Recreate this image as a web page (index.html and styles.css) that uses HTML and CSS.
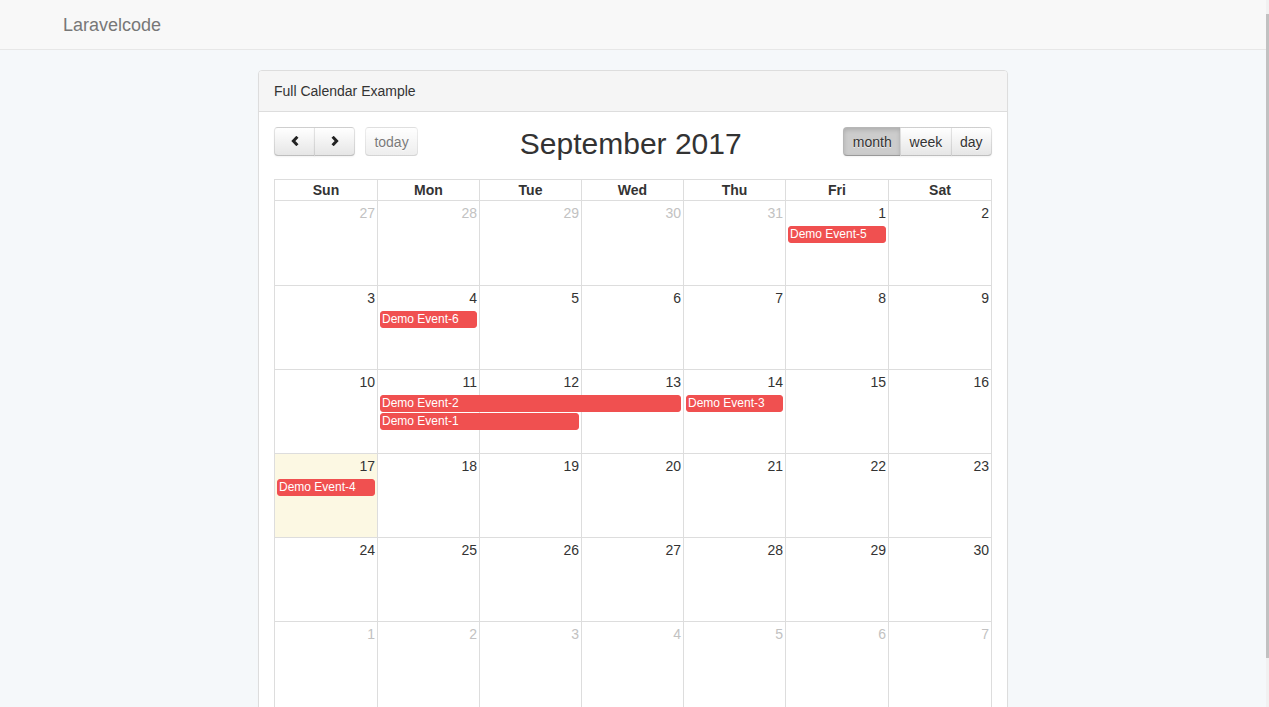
FILE: index.html
```html
<!DOCTYPE html>
<html lang="en">
<head>
<meta charset="utf-8">
<title>Laravelcode</title>
<link rel="stylesheet" href="styles.css">
</head>
<body>
<nav class="navbar">
  <div class="container">
    <a class="brand" href="#">Laravelcode</a>
  </div>
</nav>
<main class="container">
  <section class="panel">
    <div class="panel-heading">Full Calendar Example</div>
    <div class="panel-body">
      <div class="toolbar">
        <div class="tb-left">
          <div class="btn-group">
            <button class="btn icon-btn corner-left" aria-label="prev"><svg class="chev" viewBox="0 0 8 10" width="8" height="10"><polyline points="6.4,0.8 2.4,5 6.4,9.2"/></svg></button>
            <button class="btn icon-btn corner-right" aria-label="next"><svg class="chev" viewBox="0 0 8 10" width="8" height="10"><polyline points="1.6,0.8 5.6,5 1.6,9.2"/></svg></button>
          </div>
          <button class="btn corner-left corner-right disabled">today</button>
        </div>
        <div class="tb-center"><h2 class="title">September 2017</h2></div>
        <div class="tb-right">
          <div class="btn-group">
            <button class="btn corner-left active">month</button>
            <button class="btn">week</button>
            <button class="btn corner-right">day</button>
          </div>
        </div>
      </div>

      <div class="cal">
        <div class="cal-head">
          <div class="hd">Sun</div><div class="hd">Mon</div><div class="hd">Tue</div><div class="hd">Wed</div><div class="hd">Thu</div><div class="hd">Fri</div><div class="hd">Sat</div>
        </div>

        <div class="week first">
          <div class="bg c1"></div><div class="bg c2"></div><div class="bg c3"></div><div class="bg c4"></div><div class="bg c5"></div><div class="bg c6"></div><div class="bg c7"></div>
          <div class="num c1 other">27</div><div class="num c2 other">28</div><div class="num c3 other">29</div><div class="num c4 other">30</div><div class="num c5 other">31</div><div class="num c6">1</div><div class="num c7">2</div>
          <div class="ev l1 c6">Demo Event-5</div>
        </div>

        <div class="week">
          <div class="bg c1"></div><div class="bg c2"></div><div class="bg c3"></div><div class="bg c4"></div><div class="bg c5"></div><div class="bg c6"></div><div class="bg c7"></div>
          <div class="num c1">3</div><div class="num c2">4</div><div class="num c3">5</div><div class="num c4">6</div><div class="num c5">7</div><div class="num c6">8</div><div class="num c7">9</div>
          <div class="ev l1 c2">Demo Event-6</div>
        </div>

        <div class="week">
          <div class="bg c1"></div><div class="bg c2"></div><div class="bg c3"></div><div class="bg c4"></div><div class="bg c5"></div><div class="bg c6"></div><div class="bg c7"></div>
          <div class="num c1">10</div><div class="num c2">11</div><div class="num c3">12</div><div class="num c4">13</div><div class="num c5">14</div><div class="num c6">15</div><div class="num c7">16</div>
          <div class="ev l1 c2 span3">Demo Event-2</div>
          <div class="ev l1 c5">Demo Event-3</div>
          <div class="ev l2 c2 span2">Demo Event-1</div>
        </div>

        <div class="week">
          <div class="bg c1 today"></div><div class="bg c2"></div><div class="bg c3"></div><div class="bg c4"></div><div class="bg c5"></div><div class="bg c6"></div><div class="bg c7"></div>
          <div class="num c1">17</div><div class="num c2">18</div><div class="num c3">19</div><div class="num c4">20</div><div class="num c5">21</div><div class="num c6">22</div><div class="num c7">23</div>
          <div class="ev l1 c1">Demo Event-4</div>
        </div>

        <div class="week">
          <div class="bg c1"></div><div class="bg c2"></div><div class="bg c3"></div><div class="bg c4"></div><div class="bg c5"></div><div class="bg c6"></div><div class="bg c7"></div>
          <div class="num c1">24</div><div class="num c2">25</div><div class="num c3">26</div><div class="num c4">27</div><div class="num c5">28</div><div class="num c6">29</div><div class="num c7">30</div>
        </div>

        <div class="week last">
          <div class="bg c1"></div><div class="bg c2"></div><div class="bg c3"></div><div class="bg c4"></div><div class="bg c5"></div><div class="bg c6"></div><div class="bg c7"></div>
          <div class="num c1 other">1</div><div class="num c2 other">2</div><div class="num c3 other">3</div><div class="num c4 other">4</div><div class="num c5 other">5</div><div class="num c6 other">6</div><div class="num c7 other">7</div>
        </div>
      </div>
    </div>
  </section>
</main>
<div class="scrollbar" aria-hidden="true"><div class="thumb"></div></div>
</body>
</html>
```

FILE: styles.css
```css
* { box-sizing: border-box; }

body {
  margin: 0 3px 0 0;
  background: #f5f8fa;
  font-family: "Liberation Sans", Arial, Helvetica, sans-serif;
  font-size: 14px;
  line-height: 1.42857;
  color: #333;
}

/* overlay scrollbar (drawn over the right edge of the window) */
.scrollbar {
  position: fixed;
  top: 0;
  right: 0;
  bottom: 0;
  width: 3px;
  background: #f1f1f1;
  padding-top: 14px;
}
.scrollbar .thumb {
  height: 644px;
  background: #c1c1c1;
}

.container {
  width: 1170px;
  margin: 0 auto;
  padding: 0 15px;
}

.navbar {
  height: 50px;
  background: #f8f8f8;
  border-bottom: 1px solid #e7e7e7;
  margin-bottom: 20px;
}

.brand {
  display: inline-block;
  padding: 15px 0;
  font-size: 18px;
  line-height: 20px;
  color: #777;
  text-decoration: none;
}

.panel {
  width: 750px;
  margin: 0 auto 20px;
  background: #fff;
  border: 1px solid #ddd;
  border-radius: 4px;
  box-shadow: 0 1px 1px rgba(0,0,0,.05);
}

.panel-heading {
  padding: 10px 15px;
  background: #f5f5f5;
  border-bottom: 1px solid #ddd;
  border-radius: 3px 3px 0 0;
  line-height: 20px;
}

.panel-body {
  padding: 15px;
}

/* toolbar */
.toolbar {
  display: flex;
  align-items: flex-start;
  height: 33px;
  margin-bottom: 19px;
}

.tb-left, .tb-right {
  display: flex;
  align-items: flex-start;
}

.tb-left .btn-group { margin-right: 10px; }

.tb-center {
  flex: 1;
  text-align: center;
}

.title {
  margin: 0;
  font-size: 30px;
  line-height: 33px;
  font-weight: 400;
  color: #333;
}

.btn-group { display: flex; }

.btn {
  height: 2.1em;
  padding: 0 .6em;
  margin: 0;
  font-family: inherit;
  font-size: 14px;
  line-height: 1;
  color: #333;
  background-color: #f5f5f5;
  background-image: linear-gradient(to bottom, #fff, #e6e6e6);
  border: 1px solid;
  border-color: rgba(0,0,0,.1) rgba(0,0,0,.1) rgba(0,0,0,.25);
  text-shadow: 0 1px 1px rgba(255,255,255,.75);
  box-shadow: inset 0 1px 0 rgba(255,255,255,.2), 0 1px 2px rgba(0,0,0,.05);
  border-radius: 0;
  cursor: pointer;
}

.btn-group .btn + .btn { margin-left: -1px; }

.icon-btn {
  width: 41px;
  padding: 0;
  display: flex;
  align-items: center;
  justify-content: center;
}

.corner-left { border-top-left-radius: 4px; border-bottom-left-radius: 4px; }
.corner-right { border-top-right-radius: 4px; border-bottom-right-radius: 4px; }

.btn.active {
  background-color: #ccc;
  background-image: none;
  box-shadow: inset 0 2px 4px rgba(0,0,0,.15), 0 1px 2px rgba(0,0,0,.05);
}

.btn.disabled {
  opacity: .65;
  box-shadow: none;
  cursor: default;
}

.chev {
  display: block;
  margin-top: -1px;
  fill: none;
  stroke: #222;
  stroke-width: 3;
  stroke-linecap: butt;
  stroke-linejoin: miter;
}

/* calendar */
.cal {
  border-top: 1px solid #ddd;
  border-left: 1px solid #ddd;
}

.cal-head,
.week {
  display: grid;
  grid-template-columns: 103px 102px 102px 102px 102px 103px 103px;
}

.cal-head {
  border-bottom: 1px solid #ddd;
}

.hd {
  text-align: center;
  font-weight: bold;
  line-height: 20px;
  border-right: 1px solid #ddd;
}

.week {
  grid-template-rows: 24px auto auto 1fr;
  height: 84px;
  border-bottom: 1px solid #ddd;
}

.week.first { height: 85px; }
.week.last { height: 86px; }

.bg {
  grid-row: 1 / -1;
  border-right: 1px solid #ddd;
}

.bg.today { background: #fcf8e3; }

.c1 { grid-column: 1; }
.c2 { grid-column: 2; }
.c3 { grid-column: 3; }
.c4 { grid-column: 4; }
.c5 { grid-column: 5; }
.c6 { grid-column: 6; }
.c7 { grid-column: 7; }
.c2.span2 { grid-column: 2 / span 2; }
.c2.span3 { grid-column: 2 / span 3; }

.num {
  grid-row: 1;
  text-align: right;
  padding: 2px 3px 2px 2px;
  line-height: 20px;
  color: #333;
}

.num.other { color: #c2c2c2; }

.ev {
  min-width: 0;
  margin: 1px 3px 0 2px;
  padding: 0 1px;
  font-size: 12px;
  line-height: 15px;
  color: #fff;
  background: #f05050;
  border: 1px solid #f05050;
  border-radius: 3px;
  white-space: nowrap;
  overflow: hidden;
}

.l1 { grid-row: 2; }
.l2 { grid-row: 3; }
```
